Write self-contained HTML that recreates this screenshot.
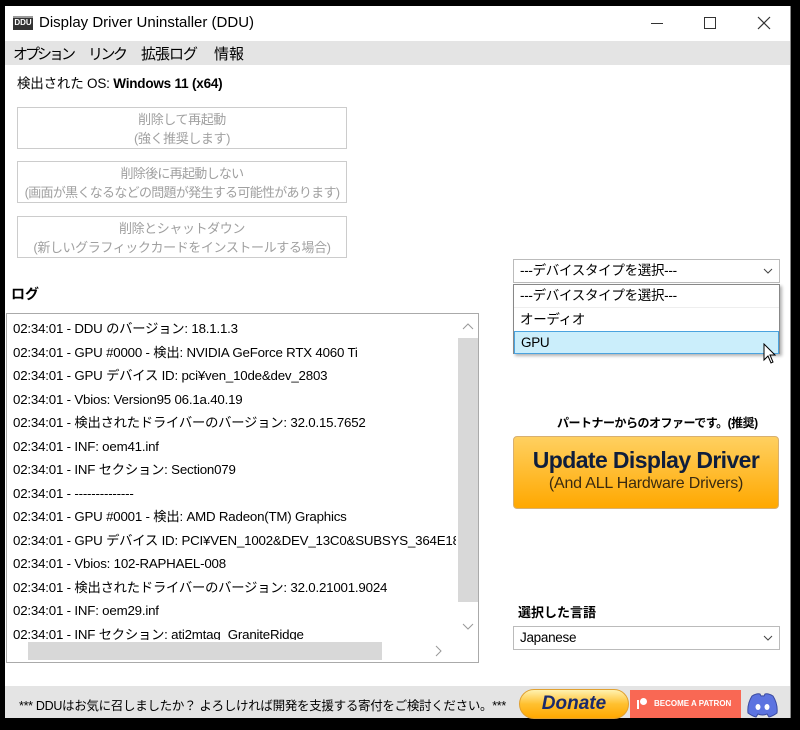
<!DOCTYPE html>
<html><head><meta charset="utf-8"><style>
*{margin:0;padding:0;box-sizing:border-box}
body{width:800px;height:730px;background:#000;position:relative;overflow:hidden;font-family:"Liberation Sans","Noto Sans CJK JP",sans-serif;font-size:14px;color:#000}
.a{position:absolute}
#win{left:5px;top:6px;width:786px;height:712px;background:#fff;border-right:1px solid #888}
.btn{position:absolute;left:12px;width:330px;height:42px;border:1px solid #ccc;color:#a0a0a0;text-align:center;font-size:13px;line-height:19px;padding-top:2px;white-space:nowrap;letter-spacing:-0.4px}
.log div{height:23.5px;line-height:23.5px;white-space:nowrap}
.sel{position:absolute;border:1px solid #bbb;background:#fff;font-size:13.5px;padding-left:6px;line-height:22px;height:24px;letter-spacing:-0.3px}
.chev{position:absolute;right:6px;top:8px}
.m{position:absolute;top:37px;font-size:15px;white-space:nowrap}
</style></head><body>
<div id="win" class="a">
 <div class="a" style="left:8px;top:10px;width:20px;height:14px;background:#333;border-top:2px solid #999"><div style="color:#fff;font-size:8px;font-weight:bold;text-align:center;line-height:10px">DDU</div></div>
 <div class="a" style="left:34px;top:8px;font-size:15px">Display Driver Uninstaller (DDU)</div>
 <div class="a" style="left:646px;top:17px;width:12px;height:1px;background:#333"></div>
 <div class="a" style="left:699px;top:11px;width:12px;height:12px;border:1px solid #333"></div>
 <svg class="a" style="left:752px;top:10px" width="14" height="14"><path d="M1 1L13 13M13 1L1 13" stroke="#333" stroke-width="1.2"/></svg>
 <div class="a" style="left:0;top:35px;width:785px;height:24px;background:#e4e4e4"></div>
 <div class="m" style="left:8px;letter-spacing:-3px">オプション</div>
 <div class="m" style="left:83px;letter-spacing:-2.5px">リンク</div>
 <div class="m" style="left:136px;letter-spacing:-1px">拡張ログ</div>
 <div class="m" style="left:209px">情報</div>
 <div class="a" style="left:12px;top:66px;font-size:13.5px;letter-spacing:-0.2px">検出された OS: <b>Windows 11 (x64)</b></div>
 <div class="btn" style="top:101px">削除して再起動<br>(強く推奨します)</div>
 <div class="btn" style="top:155px;letter-spacing:-0.7px">削除後に再起動しない<br>(画面が黒くなるなどの問題が発生する可能性があります)</div>
 <div class="btn" style="top:210px">削除とシャットダウン<br>(新しいグラフィックカードをインストールする場合)</div>
 <div class="a" style="left:6px;top:278px;font-weight:bold;font-size:14px">ログ</div>
 <div class="a log" style="left:1px;top:307px;width:473px;height:350px;border:1px solid #aaa;overflow:hidden;padding:3px 0 0 6px;font-size:13.3px;letter-spacing:-0.2px">
  <div>02:34:01 - DDU のバージョン: 18.1.1.3</div>
  <div>02:34:01 - GPU #0000 - 検出: NVIDIA GeForce RTX 4060 Ti</div>
  <div>02:34:01 - GPU デバイス ID: pci¥ven_10de&amp;dev_2803</div>
  <div>02:34:01 - Vbios: Version95 06.1a.40.19</div>
  <div>02:34:01 - 検出されたドライバーのバージョン: 32.0.15.7652</div>
  <div>02:34:01 - INF: oem41.inf</div>
  <div>02:34:01 - INF セクション: Section079</div>
  <div>02:34:01 - --------------</div>
  <div>02:34:01 - GPU #0001 - 検出: AMD Radeon(TM) Graphics</div>
  <div>02:34:01 - GPU デバイス ID: PCI¥VEN_1002&amp;DEV_13C0&amp;SUBSYS_364E1849</div>
  <div>02:34:01 - Vbios: 102-RAPHAEL-008</div>
  <div>02:34:01 - 検出されたドライバーのバージョン: 32.0.21001.9024</div>
  <div>02:34:01 - INF: oem29.inf</div>
  <div>02:34:01 - INF セクション: ati2mtag_GraniteRidge</div>
  <div class="a" style="left:449px;top:0;width:22px;height:326px;background:#fff"></div>
  <div class="a" style="left:451px;top:24px;width:20px;height:264px;background:#d8d8d8"></div>
  <svg class="a" style="left:455px;top:9px" width="12" height="8"><path d="M1 6L6 1L11 6" fill="none" stroke="#999"/></svg>
  <svg class="a" style="left:455px;top:309px" width="12" height="8"><path d="M1 1L6 6L11 1" fill="none" stroke="#999"/></svg>
  <div class="a" style="left:0;top:326px;width:451px;height:22px;background:#fff"></div>
  <div class="a" style="left:21px;top:328px;width:354px;height:18px;background:#d8d8d8"></div>
  <svg class="a" style="left:428px;top:331px" width="8" height="12"><path d="M1 1L6 6L1 11" fill="none" stroke="#999"/></svg>
 </div>
 <div class="sel" style="left:508px;top:253px;width:267px">---デバイスタイプを選択---<svg class="chev" width="10" height="6"><path d="M1 1L5 5L9 1" fill="none" stroke="#444"/></svg></div>
 <div class="a" style="left:508px;top:278px;width:267px;height:70px;border:1px solid #888;background:#fff;box-shadow:2px 2px 3px rgba(0,0,0,.3);font-size:13.5px;letter-spacing:-0.3px">
  <div style="height:23px;line-height:22px;padding-left:6px;border-bottom:1px solid #eee">---デバイスタイプを選択---</div>
  <div style="height:23px;line-height:23px;padding-left:6px">オーディオ</div>
  <div style="height:23px;line-height:21px;padding-left:6px;background:#cbeefb;border:1px solid #4aa3df">GPU</div>
 </div>
 <svg class="a" style="left:758px;top:337px" width="14" height="22"><path d="M1 1L1 17L5 13L8 20L10 19L7 12L12 12Z" fill="#fff" stroke="#000"/></svg>
 <div class="a" style="left:552px;top:408px;font-size:12px;font-weight:bold;letter-spacing:-0.5px">パートナーからのオファーです。(推奨)</div>
 <div class="a" style="left:508px;top:430px;width:266px;height:73px;border:1px solid #d8b070;border-radius:4px;background:linear-gradient(#ffd060,#ffa800);text-align:center">
  <div style="font-size:23px;font-weight:bold;color:#0f1e3c;margin-top:10px;line-height:26px;letter-spacing:-0.6px">Update Display Driver</div>
  <div style="font-size:16px;color:#3a2a10;line-height:22px;letter-spacing:-0.2px">(And ALL Hardware Drivers)</div>
 </div>
 <div class="a" style="left:513px;top:596px;font-weight:bold;font-size:13px">選択した言語</div>
 <div class="sel" style="left:508px;top:620px;width:267px">Japanese<svg class="chev" width="10" height="6"><path d="M1 1L5 5L9 1" fill="none" stroke="#444"/></svg></div>
 <div class="a" style="left:0;top:680px;width:785px;height:32px;background:#e4e4e4"></div>
 <div class="a" style="left:14px;top:689px;font-size:12.5px;letter-spacing:-0.3px;white-space:nowrap">*** DDUはお気に召しましたか？ よろしければ開発を支援する寄付をご検討ください。***</div>
 <div class="a" style="left:514px;top:683px;width:110px;height:30px;border-radius:15px;border:1px solid #e0a030;background:linear-gradient(#fff2b0,#ffc030 50%,#ffa800);text-align:center;font:italic bold 19px/28px 'Liberation Sans',sans-serif;color:#1a2a6c">Donate</div>
 <div class="a" style="left:625px;top:684px;width:111px;height:28px;background:#f96854;color:#fff;font-size:8px;font-weight:bold;line-height:28px;padding-left:24px;white-space:nowrap">BECOME A PATRON</div>
 <div class="a" style="left:632px;top:694px;width:2px;height:9px;background:#fff"></div>
 <div class="a" style="left:635px;top:692px;width:7px;height:7px;border-radius:50%;background:#fff"></div>
 <svg class="a" style="left:741px;top:686px" width="33" height="26"><path d="M6 4Q11 1 14 2L15 4Q16.5 3.8 18 4L19 2Q22 1 27 4Q32 12 31 21Q27 24 23 25L21 22Q19 23 16.5 23Q14 23 12 22L10 25Q6 24 2 21Q1 12 6 4Z" fill="#5c73e0" stroke="#3a4aa0"/><ellipse cx="12" cy="15" rx="2.5" ry="3" fill="#fff"/><ellipse cx="21" cy="15" rx="2.5" ry="3" fill="#fff"/></svg>
</div>
</body></html>
